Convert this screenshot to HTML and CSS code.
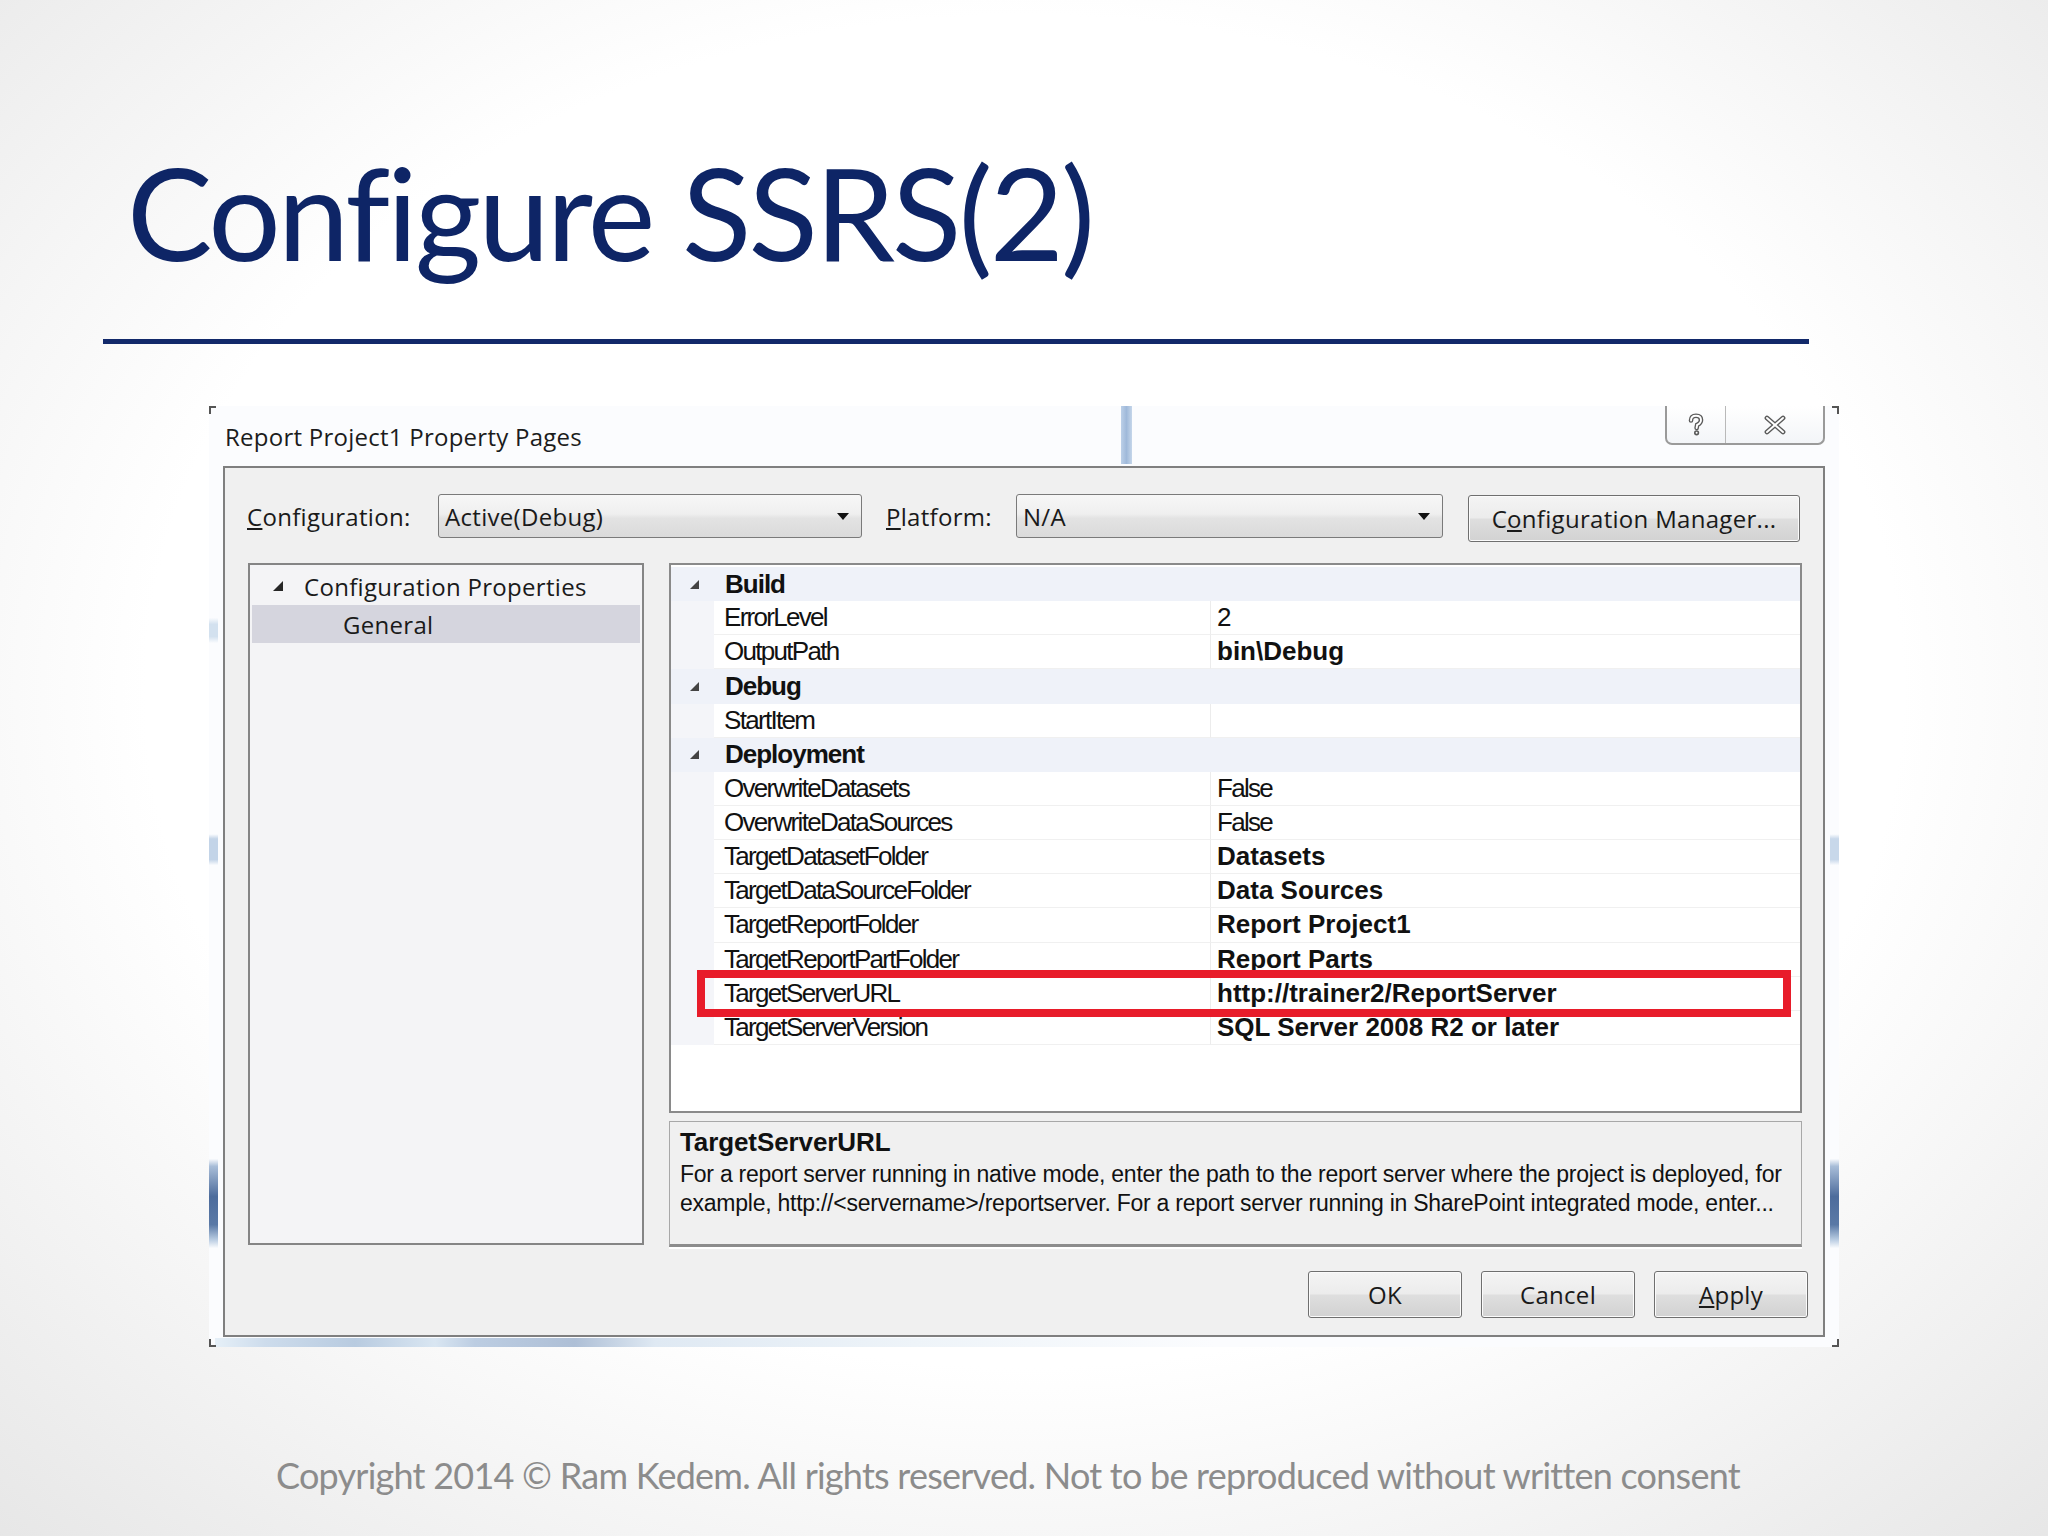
FILE: index.html
```html
<!DOCTYPE html>
<html>
<head>
<meta charset="utf-8">
<link rel="stylesheet" href="styles.css">
</head>
<body>
<div class="slide">
  <h1 class="title">Configure SSRS(2)</h1>
  <div class="rule"></div>

  <div class="dialog">
    <span class="glass glass-left"></span>
    <span class="glass glass-right"></span>
    <span class="glass glass-bottom"></span>
    <span class="corner corner-tl"></span>
    <span class="corner corner-tr"></span>
    <span class="corner corner-bl"></span>
    <span class="corner corner-br"></span>
    <div class="titlebar">
      <span class="dlg-title">Report Project1 Property Pages</span>
      <span class="tb-bar"></span>
      <div class="caption-btns">
        <span class="cbtn cbtn-help">
          <svg width="18" height="24" viewBox="0 0 18 24">
            <path d="M4 7.5 Q4 2.8 9 2.8 Q14 2.8 14 7 Q14 10.2 10.2 11.8 L9.6 15" fill="none" stroke="#5a5a5a" stroke-width="4.6" stroke-linecap="round"/>
            <path d="M4 7.5 Q4 2.8 9 2.8 Q14 2.8 14 7 Q14 10.2 10.2 11.8 L9.6 15" fill="none" stroke="#ffffff" stroke-width="1.9" stroke-linecap="round"/>
            <circle cx="9.6" cy="19.8" r="2.6" fill="#5a5a5a"/>
            <circle cx="9.6" cy="19.8" r="1" fill="#ffffff"/>
          </svg>
        </span>
        <span class="cbtn cbtn-close">
          <svg width="24" height="20" viewBox="0 0 24 20">
            <path d="M4 3 L20 17 M20 3 L4 17" fill="none" stroke="#5a5a5a" stroke-width="4.8" stroke-linecap="round"/>
            <path d="M4 3 L20 17 M20 3 L4 17" fill="none" stroke="#ffffff" stroke-width="1.9" stroke-linecap="round"/>
          </svg>
        </span>
      </div>
    </div>

    <div class="client">
      <div class="config-row">
        <span class="lbl lbl-config"><u>C</u>onfiguration:</span>
        <div class="combo combo-config">
          <span class="combo-text">Active(Debug)</span>
          <svg class="combo-arrow" width="12" height="7" viewBox="0 0 12 7"><polygon points="0,0 12,0 6,7" fill="#111"/></svg>
        </div>
        <span class="lbl lbl-platform"><u>P</u>latform:</span>
        <div class="combo combo-platform">
          <span class="combo-text">N/A</span>
          <svg class="combo-arrow" width="12" height="7" viewBox="0 0 12 7"><polygon points="0,0 12,0 6,7" fill="#111"/></svg>
        </div>
        <div class="btn btn-cfgmgr">C<u>o</u>nfiguration Manager...</div>
      </div>

      <div class="main">
        <div class="tree">
          <div class="tree-row">
            <svg class="tree-tri" width="10" height="10" viewBox="0 0 10 10"><polygon points="10,0 10,10 0,10" fill="#262626"/></svg>
            <span>Configuration Properties</span>
          </div>
          <div class="tree-row tree-selected"><span>General</span></div>
        </div>

        <div class="right">
          <div class="grid">
            <div class="row cat">
              <span class="gut"><svg width="9" height="9" viewBox="0 0 9 9"><polygon points="9,0 9,9 0,9" fill="#444"/></svg></span>
              <span class="cat-name">Build</span>
            </div>
            <div class="row prop">
              <span class="gut"></span><span class="pname">ErrorLevel</span><span class="pval">2</span>
            </div>
            <div class="row prop">
              <span class="gut"></span><span class="pname">OutputPath</span><span class="pval bold">bin\Debug</span>
            </div>
            <div class="row cat">
              <span class="gut"><svg width="9" height="9" viewBox="0 0 9 9"><polygon points="9,0 9,9 0,9" fill="#444"/></svg></span>
              <span class="cat-name">Debug</span>
            </div>
            <div class="row prop">
              <span class="gut"></span><span class="pname">StartItem</span><span class="pval"></span>
            </div>
            <div class="row cat">
              <span class="gut"><svg width="9" height="9" viewBox="0 0 9 9"><polygon points="9,0 9,9 0,9" fill="#444"/></svg></span>
              <span class="cat-name">Deployment</span>
            </div>
            <div class="row prop">
              <span class="gut"></span><span class="pname">OverwriteDatasets</span><span class="pval">False</span>
            </div>
            <div class="row prop">
              <span class="gut"></span><span class="pname">OverwriteDataSources</span><span class="pval">False</span>
            </div>
            <div class="row prop">
              <span class="gut"></span><span class="pname">TargetDatasetFolder</span><span class="pval bold">Datasets</span>
            </div>
            <div class="row prop">
              <span class="gut"></span><span class="pname">TargetDataSourceFolder</span><span class="pval bold">Data Sources</span>
            </div>
            <div class="row prop">
              <span class="gut"></span><span class="pname">TargetReportFolder</span><span class="pval bold">Report Project1</span>
            </div>
            <div class="row prop">
              <span class="gut"></span><span class="pname">TargetReportPartFolder</span><span class="pval bold">Report Parts</span>
            </div>
            <div class="row prop">
              <span class="gut"></span><span class="pname">TargetServerURL</span><span class="pval bold">http://trainer2/ReportServer</span>
            </div>
            <div class="row prop">
              <span class="gut"></span><span class="pname">TargetServerVersion</span><span class="pval bold">SQL Server 2008 R2 or later</span>
            </div>
            <div class="highlight"></div>
          </div>

          <div class="desc">
            <div class="desc-title">TargetServerURL</div>
            <div class="desc-text">For a report server running in native mode, enter the path to the report server where the project is deployed, for example, http://&lt;servername&gt;/reportserver. For a report server running in SharePoint integrated mode, enter...</div>
          </div>
        </div>
      </div>

      <div class="buttons">
        <div class="btn btn-dlg">OK</div>
        <div class="btn btn-dlg">Cancel</div>
        <div class="btn btn-dlg"><u>A</u>pply</div>
      </div>
    </div>
  </div>

  <div class="footer">Copyright 2014 © Ram Kedem. All rights reserved. Not to be reproduced without written consent</div>
</div>
</body>
</html>
```

FILE: styles.css
```css
html, body {
  margin: 0;
  padding: 0;
}

.slide {
  width: 2048px;
  height: 1536px;
  overflow: hidden;
  background: radial-gradient(ellipse 78% 80% at 50% 45%, #ffffff 55%, #e3e3e3 100%);
}

.title {
  margin: 0;
  padding: 148px 0 0 127px;
  font-family: "Lato", sans-serif;
  font-weight: 400;
  font-size: 128px;
  line-height: 128px;
  letter-spacing: -3px;
  color: #0e2566;
}

.rule {
  margin: 63px 0 0 103px;
  width: 1706px;
  height: 5px;
  background: #12296a;
}

/* ---------- dialog frame ---------- */
.dialog {
  position: relative;
  box-sizing: border-box;
  margin: 62px 0 0 209px;
  width: 1630px;
  height: 941px;
  padding: 0 14px 10px 14px;
  background: #fbfcfe;
}

.glass {
  position: absolute;
  pointer-events: none;
}
.glass-left {
  left: 0;
  top: 0;
  width: 9px;
  height: 100%;
  background: linear-gradient(to bottom,
    transparent 0%, transparent 22.5%,
    #d3e1ef 23.2%, #d3e1ef 24.5%, transparent 25.2%,
    transparent 45.5%, #c3d4e8 46%, #c3d4e8 48.2%, transparent 48.8%,
    transparent 80%, #a8bdd8 80.8%, #4d6c9c 84%, #5a79a6 87%, #b9cce2 88.6%, transparent 89.5%);
}
.glass-right {
  right: 0;
  top: 0;
  width: 9px;
  height: 100%;
  background: linear-gradient(to bottom,
    transparent 0%, transparent 45.5%, #c8d8ea 46%, #c8d8ea 48.2%, transparent 48.8%,
    transparent 80%, #a8bdd8 80.8%, #4d6c9c 84%, #5a79a6 87%, #b9cce2 88.6%, transparent 89.5%);
}
.glass-bottom {
  left: 6px;
  bottom: 0;
  width: 1000px;
  height: 9px;
  background: linear-gradient(to right,
    #e6f0f8 0%, #cddcec 5%, #b8cbe0 14%, #d9e6f2 22%, #bccde2 26%, #aebfd6 36%, #dfe9f3 44%, #eef4f9 70%, transparent 100%);
}

.corner {
  position: absolute;
  width: 5px;
  height: 6px;
  border-color: #555;
  border-style: solid;
  border-width: 0;
}
.corner-tl { left: 0; top: 0; border-left-width: 2px; border-top-width: 2px; }
.corner-tr { right: 0; top: 0; border-right-width: 2px; border-top-width: 2px; }
.corner-bl { left: 0; bottom: 0; border-left-width: 2px; border-bottom-width: 2px; }
.corner-br { right: 0; bottom: 0; border-right-width: 2px; border-bottom-width: 2px; }

.titlebar {
  position: relative;
  height: 60px;
  display: flex;
  align-items: center;
}

.dlg-title {
  margin-left: 2px;
  font-family: "Open Sans", sans-serif;
  font-size: 24px;
  letter-spacing: 0.25px;
  color: #1c1c1c;
}

.tb-bar {
  position: absolute;
  left: 898px;
  top: 0;
  width: 11px;
  height: 58px;
  background: linear-gradient(to right, #bcd0e8, #9fb9da 50%, #c5d6ea);
}

.caption-btns {
  position: absolute;
  right: 0;
  top: 0;
  width: 160px;
  height: 39px;
  box-sizing: border-box;
  display: flex;
  border: 2px solid #9a9a9a;
  border-top: none;
  border-radius: 0 0 7px 7px;
  background: linear-gradient(to bottom, #ffffff, #f3f5f8);
}

.cbtn {
  display: flex;
  align-items: center;
  justify-content: center;
}
.cbtn-help {
  width: 58px;
  border-right: 1px solid #b9b9b9;
}
.cbtn-close {
  flex: 1;
}

/* ---------- client area ---------- */
.client {
  box-sizing: border-box;
  height: 871px;
  border: 2px solid #7f7f7f;
  background: #f0f0f0;
  padding-top: 26px;
  font-family: "Open Sans", sans-serif;
  font-size: 24px;
  letter-spacing: 0.3px;
  color: #1a1a1a;
}

.config-row {
  display: flex;
  align-items: center;
  height: 44px;
  padding-left: 22px;
}

.lbl {
  white-space: nowrap;
}
.lbl-config { width: 191px; }
.lbl-platform { width: 130px; margin-left: 24px; }

.combo {
  box-sizing: border-box;
  height: 44px;
  display: flex;
  align-items: center;
  justify-content: space-between;
  padding: 0 12px 0 6px;
  border: 1px solid #7a7a7a;
  border-radius: 3px;
  background: linear-gradient(to bottom, #f7f7f7 0%, #efefef 45%, #e3e3e3 55%, #dadada 100%);
}
.combo-config { width: 424px; }
.combo-platform { width: 427px; }

.btn {
  box-sizing: border-box;
  display: flex;
  align-items: center;
  justify-content: center;
  border: 1px solid #6f6f6f;
  border-radius: 3px;
  background: linear-gradient(to bottom, #f4f4f4 0%, #ececec 48%, #dedede 52%, #d2d2d2 100%);
  box-shadow: inset 0 0 0 1px #fbfbfb;
  white-space: nowrap;
}

.btn-cfgmgr {
  width: 332px;
  height: 47px;
  margin-left: 25px;
  align-self: flex-start;
  margin-top: 1px;
}

.main {
  display: flex;
  gap: 25px;
  height: 684px;
  margin-top: 25px;
  padding-left: 23px;
}

.tree {
  box-sizing: border-box;
  width: 396px;
  height: 682px;
  border: 2px solid #858585;
  background: #f4f4f6;
  padding: 2px 2px 0 2px;
}

.tree-row {
  height: 38px;
  display: flex;
  align-items: center;
  white-space: nowrap;
}
.tree-tri {
  margin-left: 21px;
  margin-right: 21px;
}
.tree-selected {
  background: #d5d5de;
  padding-left: 91px;
}

.right {
  width: 1133px;
  display: flex;
  flex-direction: column;
  gap: 8px;
}

/* ---------- property grid ---------- */
.grid {
  position: relative;
  box-sizing: border-box;
  height: 550px;
  border: 2px solid #8a8a8a;
  background: #ffffff;
  padding-top: 2px;
  font-family: "Liberation Sans", Arial, sans-serif;
  font-size: 26px;
  letter-spacing: 0;
  color: #111;
}

.row {
  display: flex;
  height: 34.15px;
  align-items: stretch;
}

.gut {
  width: 43px;
  flex: none;
  background: #f4f5f9;
  display: flex;
  align-items: center;
  justify-content: center;
  padding-left: 3px;
  box-sizing: border-box;
}

.cat {
  background: #eff2f9;
}
.cat .gut {
  background: #eff2f9;
}
.cat-name {
  display: flex;
  align-items: center;
  padding-left: 11px;
  font-weight: bold;
  letter-spacing: -1px;
}

.pname {
  box-sizing: border-box;
  width: 497px;
  flex: none;
  display: flex;
  align-items: center;
  padding-left: 10px;
  letter-spacing: -1.7px;
  border-right: 1px solid #ececec;
  border-bottom: 1px solid #f0f0f0;
  white-space: nowrap;
}

.pval {
  flex: 1;
  display: flex;
  align-items: center;
  padding-left: 6px;
  letter-spacing: -1.7px;
  border-bottom: 1px solid #f0f0f0;
  white-space: nowrap;
}
.pval.bold {
  font-weight: bold;
  letter-spacing: 0;
}

.highlight {
  position: absolute;
  left: 26px;
  top: 405px;
  width: 1094px;
  height: 47px;
  box-sizing: border-box;
  border: 8px solid #e81c2a;
}

/* ---------- description ---------- */
.desc {
  box-sizing: border-box;
  height: 126px;
  border: 1px solid #a8a8a8;
  border-bottom: 3px solid #8c8c8c;
  box-shadow: 0 2px 0 #ffffff;
  background: #f0f0f0;
  padding: 5px 2px 0 10px;
  font-family: "Liberation Sans", Arial, sans-serif;
  color: #111;
}
.desc-title {
  font-size: 26px;
  font-weight: bold;
  letter-spacing: -0.1px;
  line-height: 30px;
  margin-bottom: 3px;
}
.desc-text {
  font-size: 23px;
  line-height: 29px;
  letter-spacing: -0.25px;
}

/* ---------- bottom buttons ---------- */
.buttons {
  display: flex;
  justify-content: flex-end;
  gap: 19px;
  margin-top: 24px;
  padding-right: 15px;
}
.btn-dlg {
  width: 154px;
  height: 47px;
}

.footer {
  margin-top: 110px;
  padding-left: 276px;
  font-family: "Lato", sans-serif;
  font-size: 36px;
  line-height: 36px;
  letter-spacing: -0.76px;
  color: #8c8c8c;
  white-space: nowrap;
}
```
